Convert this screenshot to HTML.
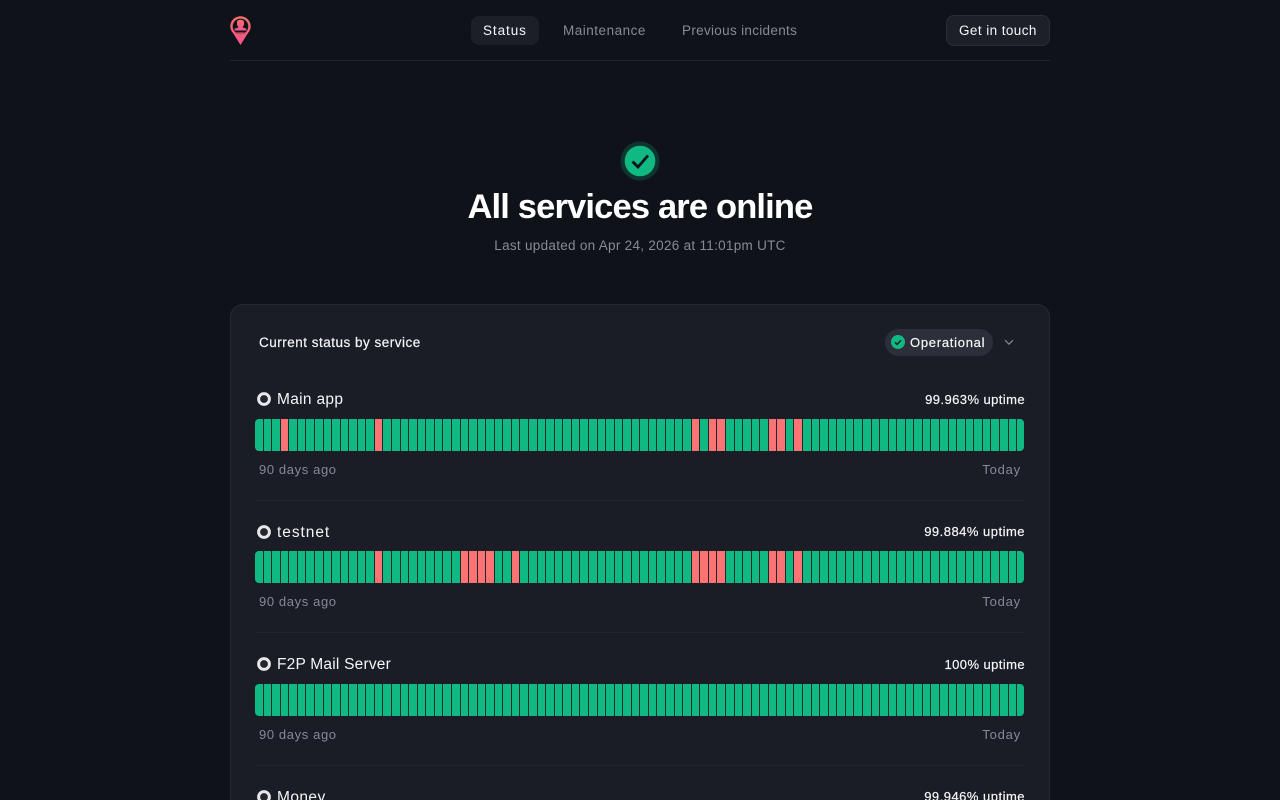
<!DOCTYPE html>
<html lang="en">
<head>
<meta charset="utf-8">
<title>Status</title>
<style>
html,body{margin:0;padding:0;width:1280px;height:800px;overflow:hidden;background:#0f1219;font-family:"Liberation Sans",sans-serif;color:#fff}
#w{position:absolute;left:0;top:0;width:1280px;height:800px;overflow:hidden}
.t{position:absolute;white-space:nowrap;line-height:20px;height:20px}
.line{position:absolute;height:1px}
.navp{position:absolute;left:471px;top:16px;width:68px;height:29px;border-radius:8px;background:#1c1f28}
.btn{position:absolute;left:946px;top:15px;width:102px;height:29px;border:1px solid #2a2d37;border-radius:8px;background:#1d2029}
.card{position:absolute;left:230px;top:304px;width:818px;height:560px;border:1px solid #262932;border-radius:13px;background:#1a1d26}
.pill{position:absolute;left:885px;top:329px;width:108px;height:27px;border-radius:14px;background:#2c2f39}
.bars{position:absolute;left:255px;width:769px;height:32px;display:flex;border-radius:4px;overflow:hidden;background:#1a2a2e}
.bars i,.bars b{display:block;flex:1 1 0;box-sizing:border-box;background:#10b981;background-clip:padding-box;border-right:1px solid #1a2a2e}
.bars b{background:#fb7373;background-clip:padding-box}
.bars i:last-child{border-right:0}
.dot{position:absolute;left:257px;width:14px;height:14px}
.name{left:277px;font-size:15.5px;color:#f4f5f7}
.up{right:255px;font-size:13px;letter-spacing:.42px;color:#f4f5f7;-webkit-text-stroke:.2px #f4f5f7}
.ago{left:259px;font-size:13px;letter-spacing:.62px;color:#868a97}
.today{right:259px;font-size:13px;letter-spacing:.8px;color:#868a97}
.abs{position:absolute;display:block}
</style>
</head>
<body>
<div id="w">
<svg class="abs" style="left:229px;top:15px" width="23" height="31" viewBox="0 0 23 31">
<defs><linearGradient id="g" x1="0" y1="0" x2="0" y2="1"><stop offset="0" stop-color="#f2706a"/><stop offset="1" stop-color="#f9508f"/></linearGradient>
<clipPath id="c"><circle cx="11.5" cy="11.400" r="7.500"/></clipPath></defs>
<path d="M11.500 1.200C5.800 1.200 1.300 5.700 1.300 11.300c0 2.600.9 4.900 2.700 6.700l7.500 12 7.500-12c1.800-1.800 2.700-4.100 2.700-6.700 0-5.600-4.500-10.100-10.200-10.100z" fill="url(#g)"/>
<circle cx="11.500" cy="11.400" r="7.800" fill="#0f1219"/>
<g clip-path="url(#c)">
<path d="M8 7c0-1.500 1.500-2.300 3.500-2.300S15 5.500 15 7v2.200c0 1-.5 1.800-1.200 2.300v1l3.700 1.200v1.800h-12v-1.800l3.700-1.200v-1C8.500 11 8 10.200 8 9.200z" fill="url(#g)"/>
<rect x="3" y="17.500" width="17" height="3" fill="url(#g)"/>
</g>
</svg>

<div class="navp"></div>
<div class="t" style="left:483px;top:21px;font-size:13.500px;letter-spacing:.92px;color:#f4f5f7">Status</div>
<div class="t" style="left:563px;top:21px;font-size:13.500px;letter-spacing:.51px;color:#868a97">Maintenance</div>
<div class="t" style="left:682px;top:21px;font-size:13.500px;letter-spacing:.31px;color:#868a97">Previous incidents</div>
<div class="btn"></div>
<div class="t" style="left:959px;top:21px;font-size:13.500px;letter-spacing:.42px;color:#f4f5f7">Get in touch</div>
<div class="line" style="left:230px;top:60px;width:820px;background:#23262e"></div>

<svg class="abs" style="left:620px;top:141px" width="40" height="40" viewBox="0 0 40 40">
<circle cx="20" cy="20" r="19.500" fill="#0e3530"/>
<circle cx="20" cy="20" r="15.300" fill="#10b981"/>
<path d="M12.500 20.500l5.500 5.500L28 14.500" fill="none" stroke="#0f1219" stroke-width="2.800"/>
</svg>
<div class="t" style="left:230px;width:820px;text-align:center;top:187px;height:40px;line-height:40px;font-size:34.500px;font-weight:700;letter-spacing:-.84px;color:#fff">All services are online</div>
<div class="t" style="left:230px;width:820px;text-align:center;top:236px;font-size:13.500px;letter-spacing:.29px;color:#868a97">Last updated on Apr 24, 2026 at 11:01pm UTC</div>

<div class="card"></div>
<div class="t" style="left:259px;top:333px;font-size:13.500px;letter-spacing:.5px;color:#f4f5f7;-webkit-text-stroke:.2px #f4f5f7">Current status by service</div>
<div class="pill"></div>
<svg class="abs" style="left:891px;top:335px" width="14" height="14" viewBox="0 0 14 14">
<circle cx="7" cy="7" r="7" fill="#10b981"/>
<path d="M4 7.300l2.100 2.100 3.900-4.200" fill="none" stroke="#14212a" stroke-width="1.500"/>
</svg>
<div class="t" style="left:910px;top:333px;font-size:13px;letter-spacing:.73px;color:#f4f5f7;-webkit-text-stroke:.2px #f4f5f7">Operational</div>
<svg class="abs" style="left:1003px;top:336px" width="12" height="12" viewBox="0 0 12 12">
<path d="M2 4.200l4 4 4-4" fill="none" stroke="#868a97" stroke-width="1.200"/>
</svg>

<svg class="abs dot" style="top:392px" viewBox="0 0 14 14"><circle cx="7" cy="7" r="5.400" fill="#23262f" stroke="#e5e7eb" stroke-width="3"/></svg>
<div class="t name" style="top:390px;letter-spacing:.31px">Main app</div>
<div class="t up" style="top:390px">99.963% uptime</div>
<div class="bars" style="top:419px">
<i></i><i></i><i></i><b></b><i></i><i></i><i></i><i></i><i></i><i></i>
<i></i><i></i><i></i><i></i><b></b><i></i><i></i><i></i><i></i><i></i>
<i></i><i></i><i></i><i></i><i></i><i></i><i></i><i></i><i></i><i></i>
<i></i><i></i><i></i><i></i><i></i><i></i><i></i><i></i><i></i><i></i>
<i></i><i></i><i></i><i></i><i></i><i></i><i></i><i></i><i></i><i></i>
<i></i><b></b><i></i><b></b><b></b><i></i><i></i><i></i><i></i><i></i>
<b></b><b></b><i></i><b></b><i></i><i></i><i></i><i></i><i></i><i></i>
<i></i><i></i><i></i><i></i><i></i><i></i><i></i><i></i><i></i><i></i>
<i></i><i></i><i></i><i></i><i></i><i></i><i></i><i></i><i></i><i></i>
</div>
<div class="t ago" style="top:460px">90 days ago</div>
<div class="t today" style="top:460px">Today</div>
<div class="line" style="left:255px;top:500px;width:769px;background:#22252e"></div>

<svg class="abs dot" style="top:525px" viewBox="0 0 14 14"><circle cx="7" cy="7" r="5.400" fill="#23262f" stroke="#e5e7eb" stroke-width="3"/></svg>
<div class="t name" style="top:523px;letter-spacing:.95px">testnet</div>
<div class="t up" style="top:522px;letter-spacing:.49px">99.884% uptime</div>
<div class="bars" style="top:551px">
<i></i><i></i><i></i><i></i><i></i><i></i><i></i><i></i><i></i><i></i>
<i></i><i></i><i></i><i></i><b></b><i></i><i></i><i></i><i></i><i></i>
<i></i><i></i><i></i><i></i><b></b><b></b><b></b><b></b><i></i><i></i>
<b></b><i></i><i></i><i></i><i></i><i></i><i></i><i></i><i></i><i></i>
<i></i><i></i><i></i><i></i><i></i><i></i><i></i><i></i><i></i><i></i>
<i></i><b></b><b></b><b></b><b></b><i></i><i></i><i></i><i></i><i></i>
<b></b><b></b><i></i><b></b><i></i><i></i><i></i><i></i><i></i><i></i>
<i></i><i></i><i></i><i></i><i></i><i></i><i></i><i></i><i></i><i></i>
<i></i><i></i><i></i><i></i><i></i><i></i><i></i><i></i><i></i><i></i>
</div>
<div class="t ago" style="top:592px">90 days ago</div>
<div class="t today" style="top:592px">Today</div>
<div class="line" style="left:255px;top:632px;width:769px;background:#22252e"></div>

<svg class="abs dot" style="top:657px" viewBox="0 0 14 14"><circle cx="7" cy="7" r="5.400" fill="#23262f" stroke="#e5e7eb" stroke-width="3"/></svg>
<div class="t name" style="top:655px;letter-spacing:.21px">F2P Mail Server</div>
<div class="t up" style="top:655px">100% uptime</div>
<div class="bars" style="top:684px">
<i></i><i></i><i></i><i></i><i></i><i></i><i></i><i></i><i></i><i></i>
<i></i><i></i><i></i><i></i><i></i><i></i><i></i><i></i><i></i><i></i>
<i></i><i></i><i></i><i></i><i></i><i></i><i></i><i></i><i></i><i></i>
<i></i><i></i><i></i><i></i><i></i><i></i><i></i><i></i><i></i><i></i>
<i></i><i></i><i></i><i></i><i></i><i></i><i></i><i></i><i></i><i></i>
<i></i><i></i><i></i><i></i><i></i><i></i><i></i><i></i><i></i><i></i>
<i></i><i></i><i></i><i></i><i></i><i></i><i></i><i></i><i></i><i></i>
<i></i><i></i><i></i><i></i><i></i><i></i><i></i><i></i><i></i><i></i>
<i></i><i></i><i></i><i></i><i></i><i></i><i></i><i></i><i></i><i></i>
</div>
<div class="t ago" style="top:725px">90 days ago</div>
<div class="t today" style="top:725px">Today</div>
<div class="line" style="left:255px;top:765px;width:769px;background:#22252e"></div>

<svg class="abs dot" style="top:790px" viewBox="0 0 14 14"><circle cx="7" cy="7" r="5.400" fill="#23262f" stroke="#e5e7eb" stroke-width="3"/></svg>
<div class="t name" style="top:788px;letter-spacing:.42px">Money</div>
<div class="t up" style="top:787px;letter-spacing:.49px">99.946% uptime</div>
</div>
</body>
</html>
